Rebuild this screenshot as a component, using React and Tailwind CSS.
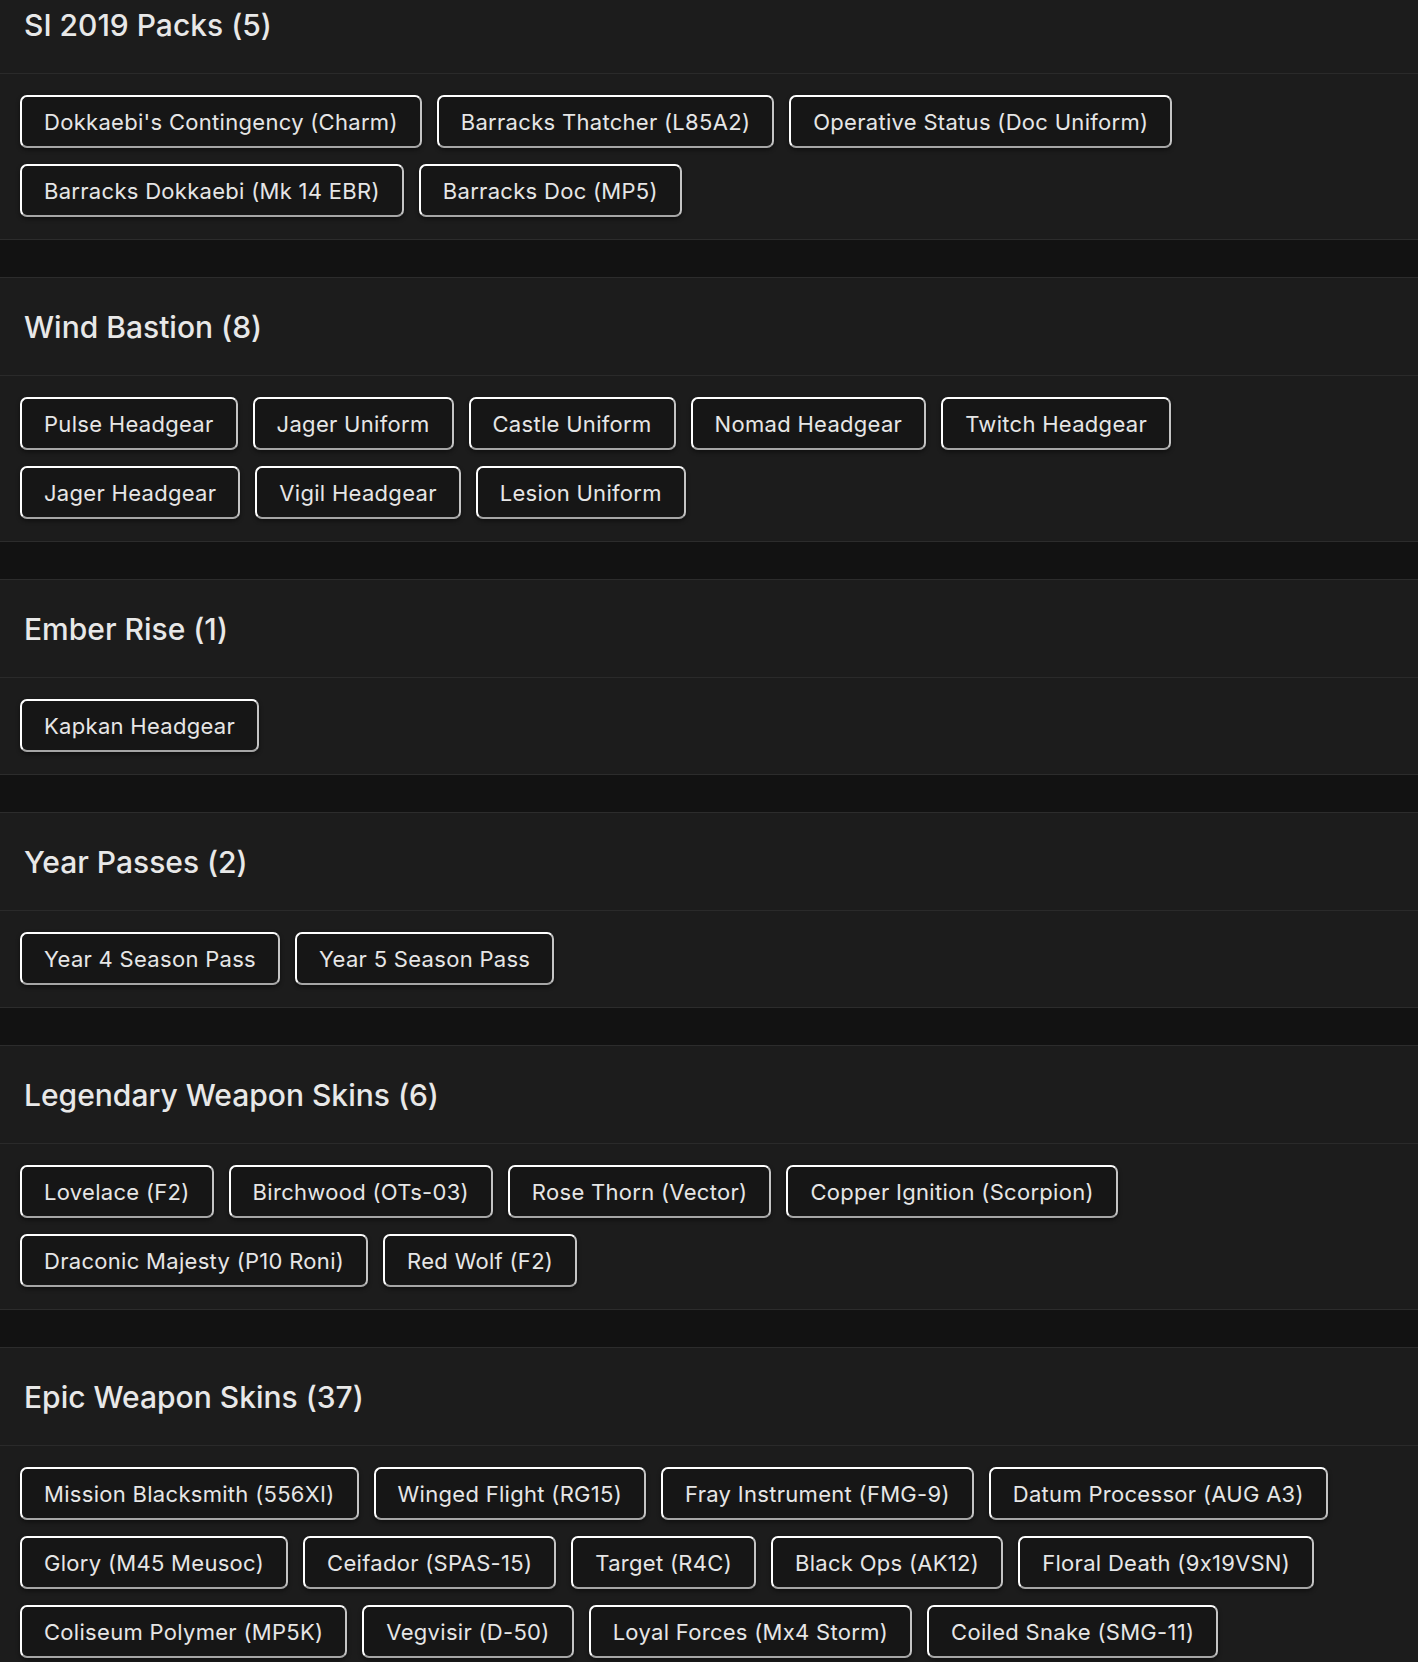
import React from "react";

const sections = [
  {
    title: "SI 2019 Packs (5)",
    items: [
      "Dokkaebi's Contingency (Charm)",
      "Barracks Thatcher (L85A2)",
      "Operative Status (Doc Uniform)",
      "Barracks Dokkaebi (Mk 14 EBR)",
      "Barracks Doc (MP5)",
    ],
  },
  {
    title: "Wind Bastion (8)",
    items: [
      "Pulse Headgear",
      "Jager Uniform",
      "Castle Uniform",
      "Nomad Headgear",
      "Twitch Headgear",
      "Jager Headgear",
      "Vigil Headgear",
      "Lesion Uniform",
    ],
  },
  { title: "Ember Rise (1)", items: ["Kapkan Headgear"] },
  { title: "Year Passes (2)", items: ["Year 4 Season Pass", "Year 5 Season Pass"] },
  {
    title: "Legendary Weapon Skins (6)",
    items: [
      "Lovelace (F2)",
      "Birchwood (OTs-03)",
      "Rose Thorn (Vector)",
      "Copper Ignition (Scorpion)",
      "Draconic Majesty (P10 Roni)",
      "Red Wolf (F2)",
    ],
  },
  {
    title: "Epic Weapon Skins (37)",
    items: [
      "Mission Blacksmith (556XI)",
      "Winged Flight (RG15)",
      "Fray Instrument (FMG-9)",
      "Datum Processor (AUG A3)",
      "Glory (M45 Meusoc)",
      "Ceifador (SPAS-15)",
      "Target (R4C)",
      "Black Ops (AK12)",
      "Floral Death (9x19VSN)",
      "Coliseum Polymer (MP5K)",
      "Vegvisir (D-50)",
      "Loyal Forces (Mx4 Storm)",
      "Coiled Snake (SMG-11)",
    ],
  },
];

function Chip({ label }) {
  return (
    <div className="h-[53px] flex items-center px-[22px] rounded-[7px] border-2 border-white border-r-[#c4c4c4] border-b-[#a6a6a6] bg-[#161616] text-[#e6e6e6] text-[22px] tracking-[0.3px] leading-none whitespace-nowrap shadow-[0_2px_4px_rgba(0,0,0,0.45)]">
      {label}
    </div>
  );
}

function Section({ title, items }) {
  return (
    <section className="bg-[#1c1c1c] border-y border-[#2c2c2c]">
      <div className="h-[98px] border-b border-[#2a2a2a] flex items-center px-[24px]">
        <h2 className="text-[30px] font-medium text-[#e8e8e8] leading-none">{title}</h2>
      </div>
      <div className="flex flex-wrap gap-x-[15px] gap-y-[16px] pl-[20px] pr-[20px] pt-[21px] pb-[22px]">
        {items.map((it) => (
          <Chip key={it} label={it} />
        ))}
      </div>
    </section>
  );
}

export default function App() {
  return (
    <div
      className="min-h-screen bg-[#121212] overflow-hidden [font-feature-settings:'calt'_0]"
      style={{ fontFamily: "Inter, 'Noto Sans', sans-serif" }}
    >
      <div className="-mt-[25px] flex flex-col gap-[37px]">
        {sections.map((s) => (
          <Section key={s.title} {...s} />
        ))}
      </div>
    </div>
  );
}
